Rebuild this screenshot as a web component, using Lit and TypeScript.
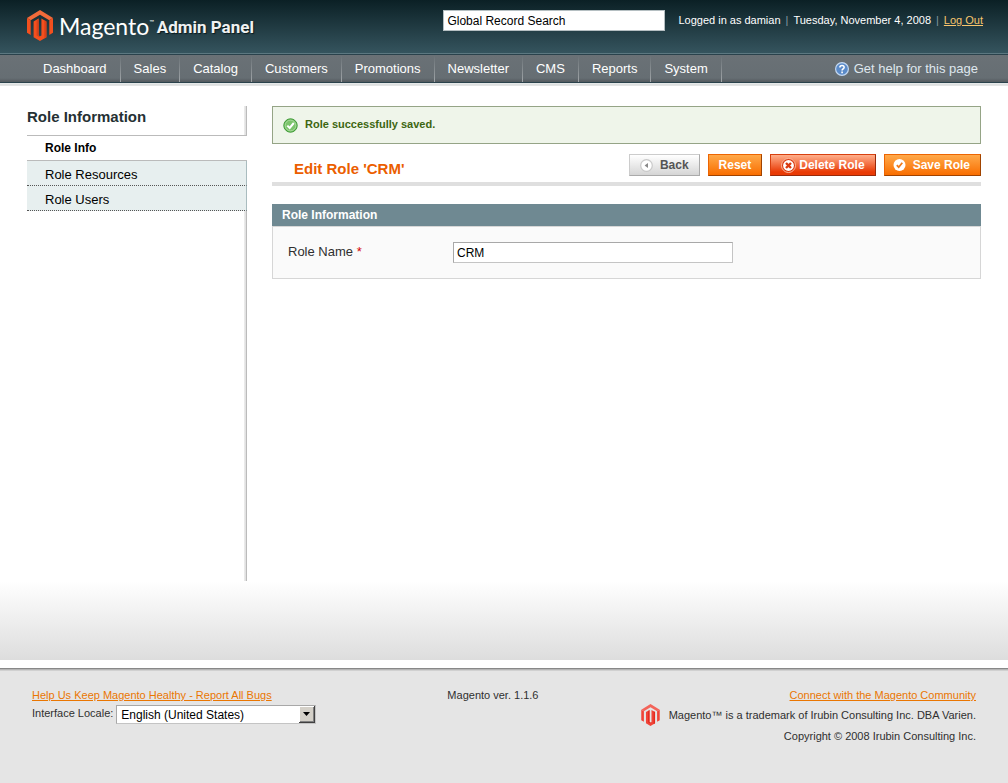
import { LitElement, html, css } from "lit";
import { customElement } from "lit/decorators.js";

const mark = (cls: string) => html`
  <svg class=${cls} viewBox="0 0 26 31" aria-hidden="true">
    <path class="roof" d="M0 8 13 0 26 8 22.3 10.3 13 4.7 3.7 10.3Z" />
    <path class="wall" d="M0 8 3.7 10.3V25L0 22.8ZM26 8 22.3 10.3V25L26 22.8Z" />
    <path class="wall" d="M6.6 11.4 11.600 8.600V25.400L13 26.200 14.400 25.400V8.600L19.400 11.400V27.200L13 31 6.600 27.200Z" />
    <path class="shade" d="M9.600 10.200 11.600 8.600V25.400L13 26.200V27.600L9.600 25.600ZM17.400 10.300 19.400 11.400V27.200L17.400 28.400Z" />
  </svg>
`;

const backIcon = html`<svg class="icon" viewBox="0 0 15 15" aria-hidden="true">
  <circle cx="7.5" cy="7.5" r="5.8" fill="#fff" stroke="#c9c9c9" stroke-width="1.2" />
  <path d="M9 5v5L5.600 7.500Z" fill="#888" />
</svg>`;

const deleteIcon = html`<svg class="icon" viewBox="0 0 15 15" aria-hidden="true">
  <circle cx="7.500" cy="7.500" r="7" fill="#d93a10" stroke="#ffb99d" stroke-width="1" />
  <circle cx="7.500" cy="7.500" r="5.400" fill="#fff" />
  <path d="M5 5 10 10M10 5 5 10" stroke="#d93a10" stroke-width="2.400" />
</svg>`;

const saveIcon = html`<svg class="icon" viewBox="0 0 15 15" aria-hidden="true">
  <circle cx="7.500" cy="7" r="6" fill="#fff" />
  <path d="M4.800 7.200 6.700 9.200 10.300 4.800" fill="none" stroke="#ef7a1a" stroke-width="1.800" />
</svg>`;

const successIcon = html`<svg class="success-icon" viewBox="0 0 15 15" aria-hidden="true">
  <circle cx="7.500" cy="7.500" r="6.700" fill="#54ad45" stroke="#3d9a35" />
  <circle cx="7.500" cy="7.500" r="5.500" fill="#7cc46c" stroke="#c3e6b8" stroke-width=".8" />
  <path d="M4.300 7.600 6.700 10 10.800 5" fill="none" stroke="#fff" stroke-width="2" />
</svg>`;

const helpIcon = html`<svg class="help-icon" viewBox="0 0 14 14" aria-hidden="true">
  <circle cx="7" cy="7" r="6.400" fill="#5b8bc9" stroke="#c3d8f2" stroke-width="1.200" />
  <path d="M4.900 5.500C4.900 2.800 9.200 2.900 9.100 5.400 9 6.900 7.100 6.700 7.100 8.400M7.100 9.600V11.200" fill="none" stroke="#fff" stroke-width="1.600" />
</svg>`;

const menu = ["Dashboard", "Sales", "Catalog", "Customers", "Promotions", "Newsletter", "CMS", "Reports", "System"];

@customElement("app-root")
export class AppRoot extends LitElement {
  static styles = css`
    :host {
      display: flex;
      flex-direction: column;
      min-height: 100vh;
      font: 11px/16px "Liberation Sans", Arial, sans-serif;
      color: #2f2f2f;
      background: #fff;
    }
    * { box-sizing: border-box; }
    h1, h2, h3, ul, p { margin: 0; padding: 0; }
    ul { list-style: none; }
    input, select, button { font: 12px/16px "Liberation Sans", Arial, sans-serif; margin: 0; border-radius: 0; }

    .top {
      display: flex;
      align-items: flex-start;
      height: 55px;
      padding: 10px 25px 0 27px;
      background: linear-gradient(#0b2025, #35545e 53px);
      border-bottom: 1px solid #2a424c;
      box-shadow: inset 0 -1px #5c7881;
      color: #fff;
    }
    .brand { display: flex; flex: 1; align-items: flex-start; color: #fff; text-decoration: none; white-space: nowrap; }
    .mark { width: 26px; height: 31px; margin-right: 6px; }
    .roof { fill: #f26b3a; }
    .wall { fill: #f4501e; }
    .shade { fill: #d9401a; }
    .word { font: 23px/32px Lato, "Open Sans", sans-serif; }
    .tm { font: 6px/24px Lato, sans-serif; }
    .panel-word {
      margin-left: 3px;
      font: bold 17px/34px Roboto, "Liberation Sans", sans-serif;
      color: #f0f2f2;
      text-shadow: 1px 1px 1px #0a1a1e;
    }
    .search { width: 222px; height: 21px; margin-right: 13px; padding: 0 3px; border: 1px solid #b5bfc2; background: #fff; color: #000; }
    .session { display: flex; gap: 5px; line-height: 20px; }
    .bar { color: #839ba2; }
    .session a { color: #f8c56d; }

    .nav {
      display: flex;
      align-items: flex-start;
      height: 31px;
      padding: 0 30px;
      background: linear-gradient(#6a7176, #666e73 23px, #53595d 27px, #2a424c 27px, #2a424c 28px, #e9ecec 28px, #d9dcdc 30px, #eee 31px);
      font-size: 13px;
      line-height: 27px;
    }
    .nav ul { display: flex; flex: 1; }
    .nav a { color: #fff; text-decoration: none; }
    .nav li a {
      display: block;
      padding: 0 13px;
      border-right: 1px solid;
      border-image: linear-gradient(#666e73, #a3a8ab) 1;
    }
    .nav .help { display: flex; align-items: center; gap: 5px; color: #dfe7ee; }
    .help-icon { width: 14px; height: 14px; }

    .middle {
      flex: 1;
      display: grid;
      grid-template-columns: 220px minmax(0, 1fr);
      column-gap: 25px;
      padding: 20px 27px 79px;
      background: linear-gradient(#fff, #ddd) bottom / 100% 79px no-repeat;
    }
    .side { background: linear-gradient(90deg, #eee, #ddd 2px, #bbb 2px) right / 3px 100% no-repeat; }
    .side h3 { height: 30px; font-size: 15px; line-height: 22px; border-bottom: 1px solid #bbb; color: #253033; }
    .side a { display: block; height: 25px; padding-left: 18px; font-size: 13px; line-height: 27px; color: #000; text-decoration: none; background: #e7efef; border-bottom: 1px dotted #555; border-right: 1px solid #a9bcbf; }
    .side a.active { background: #fff; font-size: 12px; line-height: 25px; font-weight: bold; border-bottom: 1px solid #bbb; border-right: 0; }

    .message { display: flex; align-items: flex-start; gap: 7px; padding: 9px 10px; height: 38px; border: 1px solid #95a486; background: #eff5ea; color: #3d6611; font-weight: bold; }
    .success-icon { width: 15px; height: 15px; margin-top: 2px; }
    .title { display: flex; align-items: center; gap: 8px; margin-top: 8px; padding: 2px 0 6px 22px; border-bottom: 4px solid #dfdfdf; }
    .title h2 { flex: 1; font-size: 15px; line-height: 22px; color: #eb5e00; padding-top: 4px; margin-bottom: -4px; }
    button {
      display: flex;
      align-items: center;
      gap: 6px;
      height: 22px;
      padding: 0 10px;
      border: 1px solid;
      font-weight: bold;
      color: #fff;
      border-color: #ed6502 #a04300 #a04300 #ed6502;
      background: linear-gradient(#ffa94a, #f96e00);
    }
    .icon { width: 15px; height: 15px; }
    button.back { padding-left: 9px; color: #555; border-color: #ccc #aaa #aaa #ccc; background: linear-gradient(#fff, #d5d5d5); }
    button.delete { gap: 3px; border-color: #d8400f #98290a #98290a #d8400f; background: linear-gradient(#ffaf8b, #e93a05 85%); }
    button.save { padding-left: 7px; gap: 6px; }

    .box { margin-top: 18px; }
    .box h3 { padding: 0 10px; font-size: 12px; line-height: 22px; background: #6f8992; color: #fff; }
    .fields { display: flex; padding: 15px; border: 1px solid #d6d6d6; background: #fafafa; }
    .fields label { width: 165px; font-size: 13px; line-height: 20px; }
    .req { color: #d40707; }
    .fields input { width: 280px; height: 21px; padding: 0 3px; border: 1px solid; border-color: #a8a8a8 #c4c4c4 #c4c4c4 #a8a8a8; background: #fff; color: #000; }

    .foot {
      display: grid;
      grid-template-columns: 44% auto 1fr;
      height: 123px;
      padding: 27px 32px 0;
      background: linear-gradient(#fff 8px, #888 8px, #888 9px, #b5b5b5 9px, #b5b5b5 10px, #d0d0d0 10px, #d0d0d0 11px, #e5e5e5 11px);
    }
    .foot a { color: #ea7601; }
    .locale { display: flex; gap: 3px; margin-top: 2px; }
    .locale label { line-height: 17px; }
    .picker { display: grid; width: 200px; height: 19px; }
    .picker select { grid-area: 1 / 1; appearance: none; padding: 0 4px; border: 1px solid; border-color: #a8a8a8 #c4c4c4 #c4c4c4 #a8a8a8; background: #fff; color: #000; }
    .arrow { grid-area: 1 / 1; justify-self: end; width: 17px; height: 19px; padding: 1px 0; pointer-events: none; }
    .legal { text-align: right; }
    .trade { display: flex; justify-content: flex-end; align-items: center; gap: 9px; height: 23px; }
    .small-mark { width: 19px; height: 22px; }
    .small-mark .roof { fill: #f3645a; }
    .small-mark .wall { fill: #f04438; }
    .small-mark .shade { fill: #e22b20; }
    .copy { line-height: 20px; }
  `;

  render() {
    return html`
      <header class="top">
        <a class="brand" href="#">
          ${mark("mark")}<span class="word">Magento</span><span class="tm">™</span><span class="panel-word">Admin Panel</span>
        </a>
        <input class="search" type="text" aria-label="Global Record Search" value="Global Record Search" />
        <div class="session">
          <span>Logged in as damian</span><span class="bar">|</span><span>Tuesday, November 4, 2008</span><span class="bar">|</span><a href="#">Log Out</a>
        </div>
      </header>
      <nav class="nav">
        <ul>${menu.map((m) => html`<li><a href="#">${m}</a></li>`)}</ul>
        <a class="help" href="#">${helpIcon}<span>Get help for this page</span></a>
      </nav>
      <div class="middle">
        <aside class="side">
          <h3>Role Information</h3>
          <ul>
            <li><a class="active" href="#">Role Info</a></li>
            <li><a href="#">Role Resources</a></li>
            <li><a href="#">Role Users</a></li>
          </ul>
        </aside>
        <main>
          <p class="message" role="status">${successIcon}<span>Role successfully saved.</span></p>
          <div class="title">
            <h2>Edit Role 'CRM'</h2>
            <button type="button" class="back">${backIcon}<span>Back</span></button>
            <button type="button">Reset</button>
            <button type="button" class="delete">${deleteIcon}<span>Delete Role</span></button>
            <button type="button" class="save">${saveIcon}<span>Save Role</span></button>
          </div>
          <section class="box">
            <h3>Role Information</h3>
            <div class="fields">
              <label for="role">Role Name <span class="req">*</span></label>
              <input id="role" type="text" value="CRM" />
            </div>
          </section>
        </main>
      </div>
      <footer class="foot">
        <div>
          <a href="#">Help Us Keep Magento Healthy - Report All Bugs</a>
          <div class="locale">
            <label for="locale">Interface Locale:</label>
            <div class="picker">
              <select id="locale"><option>English (United States)</option></select>
              <svg class="arrow" viewBox="0 0 17 17" aria-hidden="true">
                <path d="M0 0H16V17H0Z" fill="#404040" />
                <path d="M0 0H15V16H0Z" fill="#fff" />
                <path d="M1 1H15V16H1Z" fill="#808080" />
                <path d="M1 1H14V15H1Z" fill="#d4d0c8" />
                <path d="M4 6H11L7.500 10Z" fill="#000" />
              </svg>
            </div>
          </div>
        </div>
        <div>Magento ver. 1.1.6</div>
        <div class="legal">
          <a href="#">Connect with the Magento Community</a>
          <div class="trade">${mark("small-mark")}<span>Magento™ is a trademark of Irubin Consulting Inc. DBA Varien.</span></div>
          <p class="copy">Copyright © 2008 Irubin Consulting Inc.</p>
        </div>
      </footer>
    `;
  }
}
